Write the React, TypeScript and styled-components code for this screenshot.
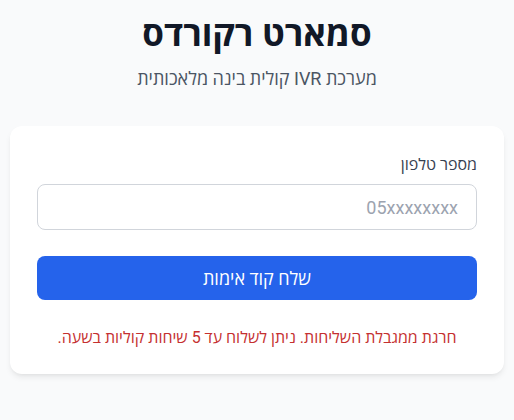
import styled, { createGlobalStyle } from "styled-components";

const GlobalStyle = createGlobalStyle`
  html, body {
    margin: 0;
    padding: 0;
    background: #f9fafb;
  }
  body {
    font-family: Roboto, "Open Sans", "Noto Sans", sans-serif;
    direction: rtl;
    color: #111827;
  }
`;

const Page = styled.div`
  box-sizing: border-box;
  min-height: 420px;
  padding: 12px 10px 0 10px;
  display: flex;
  flex-direction: column;
  align-items: stretch;
`;

const Header = styled.header`
  display: flex;
  flex-direction: column;
  align-items: center;
  gap: 8px;
  margin-bottom: 34px;
`;

const Title = styled.h1`
  margin: 0;
  font-size: 35px;
  line-height: 46px;
  font-weight: 700;
  color: #111827;
`;

const Subtitle = styled.p`
  margin: 0;
  font-size: 18px;
  line-height: 26px;
  color: #4b5563;
`;

const Card = styled.div`
  box-sizing: border-box;
  background: #ffffff;
  border-radius: 12px;
  box-shadow: 0 4px 6px -1px rgba(0, 0, 0, 0.08), 0 2px 4px -2px rgba(0, 0, 0, 0.06);
  padding: 27px 27px 24px;
  display: flex;
  flex-direction: column;
`;

const Label = styled.label`
  font-size: 16px;
  line-height: 24px;
  color: #374151;
  margin-bottom: 7px;
`;

const Input = styled.input`
  box-sizing: border-box;
  width: 100%;
  height: 46px;
  border: 1px solid #d1d5db;
  border-radius: 8px;
  padding: 0 18px;
  font-family: Roboto, "Open Sans", sans-serif;
  font-size: 18px;
  color: #111827;
  background: #fff;
  direction: rtl;
  outline: none;
  &::placeholder {
    color: #9ca3af;
  }
`;

const Button = styled.button`
  box-sizing: border-box;
  width: 100%;
  height: 44px;
  margin-top: 26px;
  border: none;
  border-radius: 8px;
  background: #2563eb;
  color: #ffffff;
  font-family: Roboto, "Open Sans", sans-serif;
  font-size: 18px;
  cursor: pointer;
`;

const ErrorText = styled.p`
  margin: 26px 0 0;
  text-align: center;
  font-size: 16px;
  line-height: 24px;
  color: #c53030;
`;

export default function App() {
  return (
    <>
      <GlobalStyle />
      <Page>
        <Header>
          <Title>סמארט רקורדס</Title>
          <Subtitle>מערכת IVR קולית בינה מלאכותית</Subtitle>
        </Header>
        <Card>
          <Label htmlFor="phone">מספר טלפון</Label>
          <Input id="phone" type="tel" placeholder="05xxxxxxxx" />
          <Button type="button">שלח קוד אימות</Button>
          <ErrorText>חרגת ממגבלת השליחות. ניתן לשלוח עד 5 שיחות קוליות בשעה.</ErrorText>
        </Card>
      </Page>
    </>
  );
}
